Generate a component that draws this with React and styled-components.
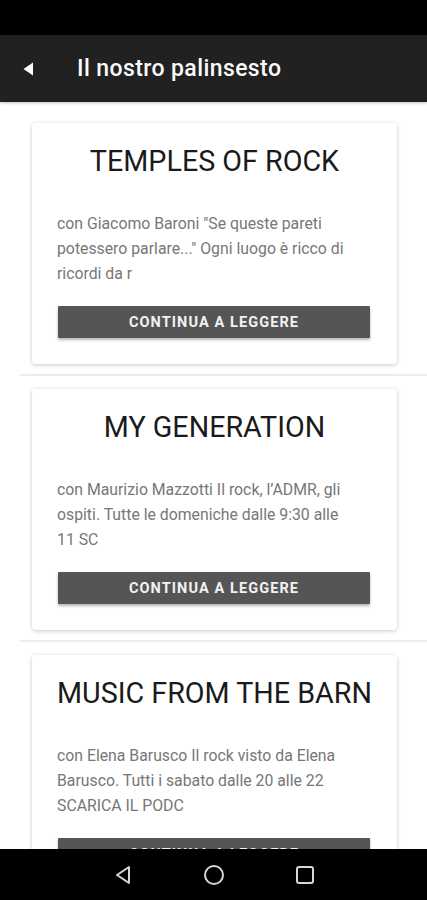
import React from 'react';
import styled, { createGlobalStyle } from 'styled-components';

// excerpts are cut where the app cuts them, one line per row
const shows = [
  {
    title: 'TEMPLES OF ROCK',
    text: 'con Giacomo Baroni "Se queste pareti\npotessero parlare..." Ogni luogo è ricco di\nricordi da r',
  },
  {
    title: 'MY GENERATION',
    text: 'con Maurizio Mazzotti Il rock, l’ADMR, gli\nospiti. Tutte le domeniche dalle 9:30 alle\n11 SC',
  },
  {
    title: 'MUSIC FROM THE BARN',
    text: 'con Elena Barusco Il rock visto da Elena\nBarusco. Tutti i sabato dalle 20 alle 22\nSCARICA IL PODC',
  },
];

function App() {
  return (
    <>
      <GlobalStyle />
      <Screen>
        <StatusBar />
        <AppBar>
          <BackButton aria-label="indietro">
            <svg width="12" height="16" viewBox="0 0 12 16">
              <path d="M11 1.5 L1.5 8 L11 14.5 Z" fill="#fff" />
            </svg>
          </BackButton>
          <Title>Il nostro palinsesto</Title>
        </AppBar>
        <Content>
          {shows.map((show) => (
            <ListItem key={show.title}>
              <Card>
                <CardTitle>{show.title}</CardTitle>
                <CardText>{show.text}</CardText>
                <ReadButton type="button">Continua a leggere</ReadButton>
              </Card>
            </ListItem>
          ))}
        </Content>
        <NavBar>
          <svg width="22" height="22" viewBox="0 0 22 22">
            <path d="M17 3 L5 11 L17 19 Z" fill="none" stroke="#d6d6d6" strokeWidth="2" strokeLinejoin="round" />
          </svg>
          <svg width="22" height="22" viewBox="0 0 22 22">
            <circle cx="11" cy="11" r="9" fill="none" stroke="#d6d6d6" strokeWidth="2" />
          </svg>
          <svg width="22" height="22" viewBox="0 0 22 22">
            <rect x="3" y="3" width="16" height="16" rx="2" fill="none" stroke="#d6d6d6" strokeWidth="2" />
          </svg>
        </NavBar>
      </Screen>
    </>
  );
}

const GlobalStyle = createGlobalStyle`
body {
  margin: 0;
  background: #fff;
  font-family: Roboto, "Liberation Sans", sans-serif;
}
`;

const Screen = styled.div`
width: 427px;
height: 900px;
display: flex;
flex-direction: column;
overflow: hidden;
background-color: #ffffff;
`;

const StatusBar = styled.div`
height: 35px;
flex-shrink: 0;
background-color: #000;
`;

const AppBar = styled.div`
height: 67px;
flex-shrink: 0;
display: flex;
align-items: center;
background-color: #212121;
box-shadow: 0 1px 3px rgba(0,0,0,0.25);
position: relative;
z-index: 1;
`;

const BackButton = styled.div`
width: 56px;
display: flex;
justify-content: center;
margin-right: 21px;
`;

const Title = styled.div`
color: #fafafa;
font-size: 23px;
font-weight: 500;
letter-spacing: 0.4px;
`;

const Content = styled.div`
flex: 1;
overflow: hidden;
padding-top: 8px;
`;

const ListItem = styled.div`
margin-left: 20px;
padding: 13px 30px 10px 12px;
border-bottom: 2px solid #ededed;
`;

const Card = styled.div`
background-color: #fff;
border-radius: 4px;
box-shadow: 0 1px 4px rgba(0,0,0,0.22);
padding: 22px 25px 26px;
display: flex;
flex-direction: column;
`;

const CardTitle = styled.div`
text-align: center;
font-size: 28.7px;
color: #1a1a1a;
line-height: 32px;
white-space: nowrap;
`;

const CardText = styled.p`
margin: 34px 0 0;
font-size: 15.8px;
line-height: 25px;
color: #777;
white-space: pre-line;
`;

const ReadButton = styled.button`
margin: 20px 2px 0 1px;
height: 32px;
border: none;
border-radius: 1px;
background-color: #555;
color: #f2f2f2;
font-family: Roboto, "Liberation Sans", sans-serif;
font-size: 14.5px;
font-weight: 700;
letter-spacing: 1.1px;
text-transform: uppercase;
box-shadow: 0 2px 3px rgba(0,0,0,0.3);
`;

const NavBar = styled.div`
height: 51px;
flex-shrink: 0;
background-color: #000;
display: flex;
justify-content: center;
align-items: center;
gap: 69px;
position: relative;
z-index: 1;
`;

export default App;
